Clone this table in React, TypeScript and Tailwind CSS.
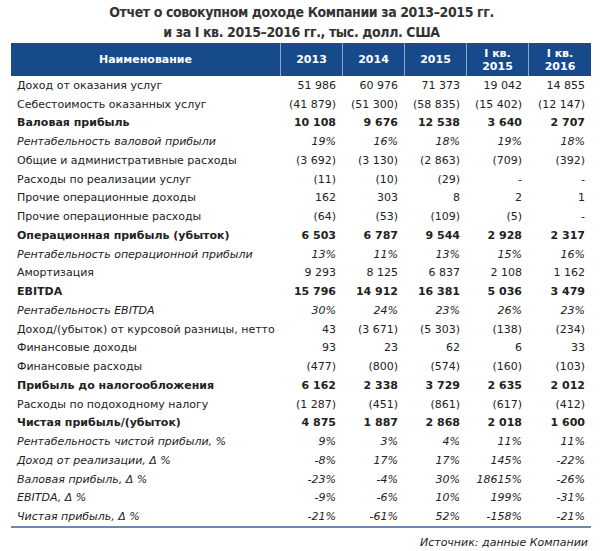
type Row = { name: string; vals: string[]; kind?: 'bold' | 'italic' };

const rows: Row[] = [
  { name: 'Доход от оказания услуг', vals: ['51 986', '60 976', '71 373', '19 042', '14 855'] },
  { name: 'Себестоимость оказанных услуг', vals: ['(41 879)', '(51 300)', '(58 835)', '(15 402)', '(12 147)'] },
  { name: 'Валовая прибыль', vals: ['10 108', '9 676', '12 538', '3 640', '2 707'], kind: 'bold' },
  { name: 'Рентабельность валовой прибыли', vals: ['19%', '16%', '18%', '19%', '18%'], kind: 'italic' },
  { name: 'Общие и административные расходы', vals: ['(3 692)', '(3 130)', '(2 863)', '(709)', '(392)'] },
  { name: 'Расходы по реализации услуг', vals: ['(11)', '(10)', '(29)', '-', '-'] },
  { name: 'Прочие операционные доходы', vals: ['162', '303', '8', '2', '1'] },
  { name: 'Прочие операционные расходы', vals: ['(64)', '(53)', '(109)', '(5)', '-'] },
  { name: 'Операционная прибыль (убыток)', vals: ['6 503', '6 787', '9 544', '2 928', '2 317'], kind: 'bold' },
  { name: 'Рентабельность операционной прибыли', vals: ['13%', '11%', '13%', '15%', '16%'], kind: 'italic' },
  { name: 'Амортизация', vals: ['9 293', '8 125', '6 837', '2 108', '1 162'] },
  { name: 'EBITDA', vals: ['15 796', '14 912', '16 381', '5 036', '3 479'], kind: 'bold' },
  { name: 'Рентабельность EBITDA', vals: ['30%', '24%', '23%', '26%', '23%'], kind: 'italic' },
  { name: 'Доход/(убыток) от курсовой разницы, нетто', vals: ['43', '(3 671)', '(5 303)', '(138)', '(234)'] },
  { name: 'Финансовые доходы', vals: ['93', '23', '62', '6', '33'] },
  { name: 'Финансовые расходы', vals: ['(477)', '(800)', '(574)', '(160)', '(103)'] },
  { name: 'Прибыль до налогообложения', vals: ['6 162', '2 338', '3 729', '2 635', '2 012'], kind: 'bold' },
  { name: 'Расходы по подоходному налогу', vals: ['(1 287)', '(451)', '(861)', '(617)', '(412)'] },
  { name: 'Чистая прибыль/(убыток)', vals: ['4 875', '1 887', '2 868', '2 018', '1 600'], kind: 'bold' },
  { name: 'Рентабельность чистой прибыли, %', vals: ['9%', '3%', '4%', '11%', '11%'], kind: 'italic' },
  { name: 'Доход от реализации, Δ %', vals: ['-8%', '17%', '17%', '145%', '-22%'], kind: 'italic' },
  { name: 'Валовая прибыль, Δ %', vals: ['-23%', '-4%', '30%', '18615%', '-26%'], kind: 'italic' },
  { name: 'EBITDA, Δ %', vals: ['-9%', '-6%', '10%', '199%', '-31%'], kind: 'italic' },
  { name: 'Чистая прибыль, Δ %', vals: ['-21%', '-61%', '52%', '-158%', '-21%'], kind: 'italic' },
];

const font = { fontFamily: '"DejaVu Sans", Verdana, sans-serif' };

export default function App() {
  return (
    <div className="w-[603px] h-[551px] bg-white text-[#222]" style={font}>
      {/* заголовок */}
      <div className="pt-[2px] text-center text-[14px] font-bold leading-[20px] text-[#333] tracking-[-0.4px]" style={{ fontFamily: '"DejaVu Sans Condensed", "DejaVu Sans", sans-serif' }}>
        <div>Отчет о совокупном доходе Компании за 2013–2015 гг.</div>
        <div>и за I кв. 2015–2016 гг., тыс. долл. США</div>
      </div>

      <div className="ml-[11px] mt-[1px] w-[580px]">
        <div className="grid grid-cols-[269px_62px_62px_62px_62px_63px] h-[33px] bg-[#174a8b] text-white font-bold text-[11px] leading-[13px]">
          <div className="flex items-center justify-center">Наименование</div>
          {['2013', '2014', '2015'].map((y) => (
            <div key={y} className="flex items-center justify-center border-l border-[#8ea8cc]">{y}</div>
          ))}
          {['2015', '2016'].map((y) => (
            <div key={y} className="flex flex-col items-center justify-center border-l border-[#8ea8cc]">
              <span>I кв.</span>
              <span>{y}</span>
            </div>
          ))}
        </div>

        <div className="border-b-2 border-[#6a88b0]">
          {rows.map((r) => (
            <div
              key={r.name}
              className={
                'grid grid-cols-[269px_62px_62px_62px_62px_63px] h-[18.75px] items-center text-[11px] leading-none ' +
                (r.kind === 'bold' ? 'font-bold ' : '') +
                (r.kind === 'italic' ? 'italic ' : '')
              }
            >
              <div className="pl-[6px] whitespace-nowrap">{r.name}</div>
              {r.vals.map((v, i) => (
                <div key={i} className="pr-[6px] text-right whitespace-nowrap">{v}</div>
              ))}
            </div>
          ))}
        </div>

        <div className="pt-[7px] pr-[3px] text-right text-[11px] italic">Источник: данные Компании</div>
      </div>
    </div>
  );
}
